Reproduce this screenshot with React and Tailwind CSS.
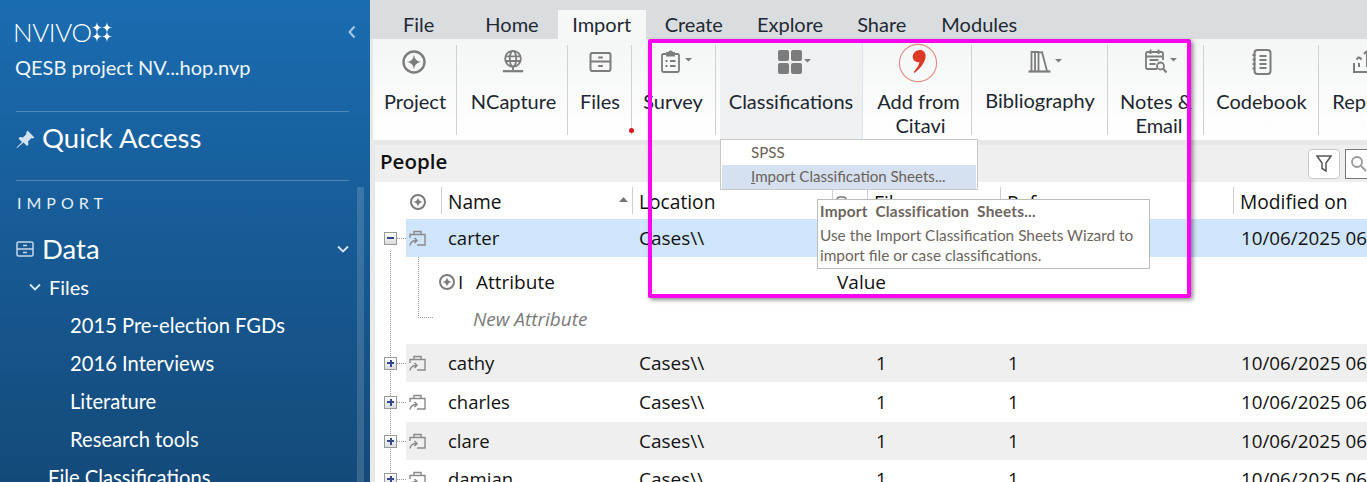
const lato = { fontFamily: 'Lato, sans-serif' };
const G = '#7c7c7c';

function Caret({ x = 0, y = 0 }) {
  return <path d={`M${x} ${y}h7l-3.5 3.5z`} fill={G} stroke="none" />;
}
function ProjectIcon({ size = 24, sw = 2.4, className = 'shrink-0' }) {
  return (
    <svg width={size} height={size} viewBox="0 0 24 24" fill="none" className={className}>
      <circle cx="12" cy="12" r="10.5" stroke={G} strokeWidth={sw} />
      <path d="M12 4.500c.6 4.500 2.500 6.900 7.500 7.500-5 .6-6.900 3-7.500 7.500-.6-4.500-2.500-6.900-7.500-7.500 5-.6 6.900-3 7.500-7.500z" fill={G} />
    </svg>
  );
}
function NCaptureIcon() {
  return (
    <svg width="24" height="25" viewBox="0 0 26 26" fill="none" stroke={G} strokeWidth="2">
      <circle cx="13" cy="10" r="8.500" />
      <ellipse cx="13" cy="10" rx="3.500" ry="8.500" />
      <path d="M4.500 7.500h17M4.500 12.500h17M13 18.500v4" />
      <path d="M2 23.500h22" strokeWidth="2.400" />
    </svg>
  );
}
function FilesIcon({ w = 23, h = 20, sw = 2.2 }) {
  return (
    <svg width={w} height={h} viewBox="0 0 24 22" fill="none" stroke={G} strokeWidth={sw}>
      <rect x="1" y="1" width="22" height="20" rx="2" />
      <path d="M1 10.500h22M9.500 6h5M9.500 15.500h5" />
    </svg>
  );
}
function SurveyIcon() {
  return (
    <svg width="32" height="24" viewBox="0 0 32 24" fill="none" stroke={G} strokeWidth="1.800" className="ml-[6px]">
      <path d="M5.500 4H2.500a1.500 1.500 0 0 0-1.500 1.500v15A1.500 1.500 0 0 0 2.500 22h14a1.500 1.500 0 0 0 1.500-1.500v-15A1.500 1.500 0 0 0 16.500 4h-3" />
      <path d="M6 5.500V3h2a1.500 1.500 0 0 1 3 0h2v2.500z" fill={G} />
      <path d="M4.500 11h2M9 11h5.500M4.500 16h2M9 16h5.500" strokeWidth="2" />
      <Caret x={24} y={8} />
    </svg>
  );
}
function ClassIcon() {
  return (
    <svg width="34" height="24" viewBox="0 0 34 24" fill={G} className="ml-[7px]">
      <rect x="0" y="0" width="11" height="11" rx="2" />
      <rect x="13" y="0" width="11" height="11" rx="2" />
      <rect x="0" y="13" width="11" height="11" rx="2" />
      <rect x="13" y="13" width="11" height="11" rx="2" />
      <Caret x={26} y={9} />
    </svg>
  );
}
function CitaviIcon() {
  return (
    <svg width="40" height="40" viewBox="0 0 42 42" fill="none">
      <circle cx="21" cy="21" r="19.500" stroke="#e58b80" strokeWidth="1.200" />
      <path d="M20 8c5-2 9 1 9 5.500 0 6-5 13-11.500 18l-1-1c3-3.500 5.500-7 6-10.500-3.500.8-7-1.500-7-5.500 0-3 2-5.500 4.500-6.500z" fill="#dc3a26" />
    </svg>
  );
}
function BiblioIcon() {
  return (
    <svg width="34" height="24" viewBox="0 0 34 24" fill="none" stroke={G} strokeWidth="1.800" className="ml-[10px]">
      <path d="M3.500 21V2h3.500v19M7 21V2h3.500v19M10.500 21V3l3.500-1 5 19" />
      <path d="M0.500 21.500h22" strokeWidth="2.200" />
      <Caret x={27} y={9} />
    </svg>
  );
}
function NotesIcon() {
  return (
    <svg width="32" height="26" viewBox="0 0 32 26" fill="none" stroke={G} strokeWidth="1.800" className="ml-[10px]">
      <path d="M12 20H2.500A1.500 1.500 0 0 1 1 18.500v-14A1.500 1.500 0 0 1 2.500 3h14A1.500 1.500 0 0 1 18 4.500V11" />
      <path d="M5.500 0.500v4.500M13.500 0.500v4.500M1 7.500h17M4.500 11h9M4.500 15h6" />
      <circle cx="15.500" cy="17" r="3.500" />
      <path d="M18 19.500l3.500 4" strokeWidth="2" />
      <Caret x={25} y={9} />
    </svg>
  );
}
function CodebookIcon() {
  return (
    <svg width="20" height="26" viewBox="0 0 20 26" fill="none" stroke={G} strokeWidth="2">
      <rect x="2.500" y="1" width="16" height="24" rx="3" />
      <path d="M0.500 6h3M0.500 10.500h3M0.500 15h3M0.500 19.500h3" />
      <path d="M7.500 7h7M7.500 11h7M7.500 15h7M7.500 19h7" strokeWidth="2" />
    </svg>
  );
}
function ReportIcon() {
  return (
    <svg width="26" height="26" viewBox="0 0 26 26" fill="none" stroke={G} strokeWidth="2" className="ml-[8px]">
      <path d="M1 14v9h24v-9M6 14v4M6 8l-2.500 2.500M6 8l2.500 2.500M14 2v16M14 2l-3 3M14 2l3 3" />
    </svg>
  );
}
function CaseIcon() {
  return (
    <svg width="17" height="17" viewBox="0 0 17 17" fill="none" stroke="#8a8a8a" strokeWidth="1.400">
      <path d="M1 8V4.500h15V15H8" />
      <path d="M5 4.500V1.500h7v3" />
      <path d="M1 15.500c.5-3.500 2.500-5 6.500-5M5.500 8l2.500 2.500L5.500 13" strokeWidth="1.500" />
    </svg>
  );
}
function Star({ x, y }) {
  return <path d={`M${x} ${y - 5.500}c.4 3.500 1.600 5 5 5.500-3.400.5-4.600 2-5 5.500-.4-3.500-1.600-5-5-5.500 3.400-.5 4.600-2 5-5.500z`} fill="white" />;
}
function FilesIconWhite() {
  return (
    <svg width="18" height="16" viewBox="0 0 18 16" fill="none" stroke="#c5d8e9" strokeWidth="1.500">
      <rect x="1" y="1" width="16" height="14" rx="1.500" />
      <path d="M1 8h16M7 4.500h4M7 11.500h4" />
    </svg>
  );
}

function Sidebar() {
  return (
    <aside className="relative w-[370px] h-full shrink-0 overflow-hidden text-white bg-gradient-to-b from-[#1a6cb1] to-[#144a7a]" style={lato}>
      <div className="flex items-center pl-[13px] pr-[12px] pt-[17px] h-[46px]">
        <span className="text-[26px] leading-none font-light tracking-[-0.4px]">NVIVO</span>
        <svg width="22" height="20" viewBox="0 0 22 20" className="ml-[-1px]">
          <Star x={6} y={5.500} /><Star x={16} y={5.500} /><Star x={6} y={14.500} /><Star x={16} y={14.500} />
        </svg>
        <svg width="8" height="14" viewBox="0 0 8 14" className="ml-auto mr-[2px]" fill="none" stroke="#a8c6e0" strokeWidth="2">
          <path d="M6.500 1.500L1.500 7l5 5.500" />
        </svg>
      </div>
      <div className="pl-[15px] mt-[9px] text-[20px] leading-[24px] text-[#eef5fb]">QESB project NV...hop.nvp</div>
      <div className="mx-[16px] w-[333px] mt-[32px] border-t border-white/25"></div>
      <div className="flex items-center pl-[16px] h-[68px] pb-[16px]">
        <svg width="19" height="19" viewBox="0 0 19 19" fill="#d3e2f0" className="mt-[3px]">
          <path d="M11.500 0.500l7 7-2 1-1-.5-3.500 3.500.5 3-1.500 1.500-3.500-3.500L1 18l-.5-.5L6 12 2.500 8.500 4 7l3 .5L10.500 4 10 3z" />
        </svg>
        <span className="ml-[7px] text-[27.500px] leading-none">Quick Access</span>
      </div>
      <div className="mx-[16px] w-[333px] border-t border-white/25"></div>
      <div className="pl-[17px] mt-[12px] text-[16px] leading-[20px] tracking-[5px] text-[#e6f0f8]">IMPORT</div>
      <div className="flex items-center pl-[16px] pr-[21px] mt-[16px] h-[39px]">
        <FilesIconWhite />
        <span className="ml-[8px] text-[27.500px] leading-none">Data</span>
        <svg width="12" height="8" viewBox="0 0 12 8" className="ml-auto" fill="none" stroke="#d8e6f2" strokeWidth="1.800"><path d="M1 1.500l5 5 5-5" /></svg>
      </div>
      <div className="flex items-center pl-[29px] h-[38px]">
        <svg width="12" height="8" viewBox="0 0 12 8" fill="none" stroke="#d8e6f2" strokeWidth="1.800"><path d="M1 1.500l5 5 5-5" /></svg>
        <span className="ml-[8px] text-[20px]">Files</span>
      </div>
      {['2015 Pre-election FGDs', '2016 Interviews', 'Literature', 'Research tools'].map((t) => (
        <div key={t} className="pl-[70px] h-[38px] flex items-center text-[20.200px]">{t}</div>
      ))}
      <div className="pl-[48px] h-[38px] flex items-center text-[20.200px]">File Classifications</div>
      <div className="absolute left-[357px] top-[187px] bottom-0 w-[7px] bg-white/15"></div>
    </aside>
  );
}

function Tabs() {
  const tabs = [
    ['File', 'px-[16px] ml-[17px]'], ['Home', 'px-[16px] ml-[19px]'], ['Import', 'w-[88px] justify-center ml-[3px] bg-[#f6f7f7]'], ['Create', 'px-[16px] ml-[3px]'],
    ['Explore', 'px-[16px] ml-[2px]'], ['Share', 'px-[16px] ml-[2px]'], ['Modules', 'px-[16px] ml-[3px]'],
  ];
  return (
    <div className="h-[39px] flex items-end bg-[#dadde0] text-[20px] text-[#1f2933] shrink-0" style={lato}>
      {tabs.map(([t, c]) => (
        <div key={t} className={`h-[29px] pb-[2px] flex items-center whitespace-nowrap ${c}`}>{t}</div>
      ))}
    </div>
  );
}

function RibbonBtn({ w, icon, children, top = 'pt-[5px]', active, sep = true, h = 'h-[35px]', gap = 'mt-[10px]' }) {
  return (
    <div className={`relative shrink-0 h-full flex flex-col items-center ${w} ${top} ${active ? 'bg-[#eff0f1] border-r border-[#dbe4f2]' : ''}`}>
      <div className={`${h} flex items-center justify-center`}>{icon}</div>
      <div className={`text-[20px] leading-[24px] ${gap} whitespace-nowrap text-center text-[#1d2730]`}>{children}</div>
      {sep && <div className="absolute right-0 top-[6px] bottom-[5px] w-px bg-[#cfd2d4]"></div>}
    </div>
  );
}

function Ribbon() {
  return (
    <div className="h-[101px] ml-[3px] flex overflow-hidden bg-gradient-to-b from-[#f4f5f5] to-[#ffffff] shrink-0" style={lato}>
      <RibbonBtn w="w-[84px]" icon={<ProjectIcon className="mr-[2px]" />}>Project</RibbonBtn>
      <RibbonBtn w="w-[111px]" icon={<NCaptureIcon />}><span className="block ml-[2px]">NCapture</span></RibbonBtn>
      <div className="relative shrink-0 w-[64px]">
        <RibbonBtn w="w-[64px]" icon={<FilesIcon />}>Files</RibbonBtn>
        <div className="absolute right-[-2px] bottom-[7px] w-[5px] h-[5px] rounded-full bg-[#e0141c]"></div>
      </div>
      <RibbonBtn w="w-[84px]" icon={<SurveyIcon />}><span className="block mr-[2px]">Survey</span></RibbonBtn>
      <div className="w-[4px] shrink-0"></div>
      <RibbonBtn w="w-[143px]" icon={<ClassIcon />} active sep={false}>Classifications</RibbonBtn>
      <RibbonBtn w="w-[109px]" icon={<CitaviIcon />} top="pt-[4px]" h="h-[40px]" gap="mt-[6px]">
        <span className="block ml-[2px]">Add from</span>
        <span className="block ml-[6px]">Citavi</span>
      </RibbonBtn>
      <RibbonBtn w="w-[136px]" icon={<BiblioIcon />} gap="mt-[9px]">Bibliography</RibbonBtn>
      <RibbonBtn w="w-[96px]" icon={<NotesIcon />}>
        <span className="block">Notes &amp;</span>
        <span className="block ml-[6px]">Email</span>
      </RibbonBtn>
      <RibbonBtn w="w-[115px]" icon={<CodebookIcon />}>Codebook</RibbonBtn>
      <RibbonBtn w="w-[86px]" icon={<ReportIcon />} sep={false}>Report</RibbonBtn>
    </div>
  );
}

function PeopleBar() {
  return (
    <div className="h-[37px] ml-[5px] mt-[5px] flex items-center bg-[#efefef] pl-[5px] shrink-0">
      <span className="text-[20.500px] font-semibold text-[#111] mb-[5px]">People</span>
      <div className="ml-auto flex items-center">
        <div className="w-[32px] h-[30px] rounded-[4px] border border-[#c8c8c8] bg-white flex items-center justify-center">
          <svg width="16" height="17" viewBox="0 0 16 17" fill="none" stroke="#555" strokeWidth="1.500"><path d="M1 1h14L10 8v8l-4-2.500V8z" /></svg>
        </div>
        <div className="ml-[5px] w-[22px] h-[30px] border border-[#777] border-r-0 bg-white flex items-center pl-[4px] overflow-hidden">
          <svg width="18" height="18" viewBox="0 0 18 18" fill="none" stroke="#999" strokeWidth="1.800" className="shrink-0"><circle cx="7" cy="7" r="5" /><path d="M11 11l5 5" /></svg>
        </div>
      </div>
    </div>
  );
}

function HeaderCell({ w, children, sep = true }) {
  return (
    <div className={`relative shrink-0 h-full flex items-center pl-[7px] pt-[3px] whitespace-nowrap ${w}`}>
      {sep && <div className="absolute left-0 top-[5px] bottom-[5px] w-px bg-[#cfcfcf]"></div>}
      {children}
    </div>
  );
}

function Expander({ open }) {
  return (
    <div className="ml-[9px] w-[13px] h-[13px] border border-[#9a9a9a] bg-gradient-to-b from-[#ffffff] to-[#dcdcdc] flex items-center justify-center relative z-10 shrink-0">
      <div className="w-[7px] h-[2px] bg-[#34478f]"></div>
      {!open && <div className="absolute w-[2px] h-[7px] bg-[#34478f]"></div>}
    </div>
  );
}

function Row({ name, h, bg = 'bg-white', open }) {
  return (
    <div className={`flex items-center ${h}`}>
      <div className="w-[31px] shrink-0 flex items-center">
        <Expander open={open} />
        <div className="w-[9px] border-t border-dotted border-[#999]"></div>
      </div>
      <div className={`flex-1 h-full flex items-center ${bg}`}>
        <div className="w-[233px] shrink-0 flex items-center pl-[3px]">
          <CaseIcon />
          <span className="ml-[22px]">{name}</span>
        </div>
        <div className="w-[237px] shrink-0 text-[19px]">Cases\\</div>
        <div className="w-[132px] shrink-0">{name === 'carter' ? '' : '1'}</div>
        <div className="w-[233px] shrink-0">{name === 'carter' ? '' : '1'}</div>
        <div className="whitespace-nowrap text-[18.800px]">10/06/2025 06:41</div>
      </div>
    </div>
  );
}

function Table() {
  return (
    <div className="relative flex-1 ml-[5px] bg-white overflow-hidden text-[18.500px] text-[#111]">
      <div className="absolute left-[15px] top-[69px] bottom-0 border-l border-dotted border-[#999]"></div>
      <div className="flex items-center h-[37px] pl-[31px] text-[19.200px]">
        <div className="w-[35px] h-full shrink-0 flex items-center pl-[4px] pt-[3px]"><ProjectIcon size={16} sw={3} /></div>
        <HeaderCell w="w-[191px]">
          Name
          <svg width="9" height="5" viewBox="0 0 9 5" className="absolute right-[4px] top-[15px]"><path d="M0 5h9L4.500 0z" fill="#777" /></svg>
        </HeaderCell>
        <HeaderCell w="w-[200px]">Location</HeaderCell>
        <HeaderCell w="w-[35px]">
          <svg width="18" height="12" viewBox="0 0 18 12" fill="none" stroke="#777" strokeWidth="1.600" className="ml-[-3px]">
            <rect x="1" y="1" width="9" height="6" rx="3" /><rect x="8" y="5" width="9" height="6" rx="3" />
          </svg>
        </HeaderCell>
        <HeaderCell w="w-[133px]"><span className="mt-[2px]">Files</span></HeaderCell>
        <HeaderCell w="w-[233px]"><span className="mt-[2px]">References</span></HeaderCell>
        <HeaderCell w="w-[140px]">Modified on</HeaderCell>
      </div>
      <Row name="carter" h="h-[38px]" bg="bg-[#cfe5fb]" open />
      <div className="relative h-[87px] text-[19px]">
        <div className="absolute left-[43px] top-0 h-[61px] w-[15px] border-l border-b border-dotted border-[#999]"></div>
        <div className="flex items-center h-[50px] pl-[64px]">
          <ProjectIcon size={16} sw={3} />
          <span className="ml-[3px] w-[18px]">I</span>
          <span className="w-[361px]">Attribute</span>
          <span>Value</span>
        </div>
        <div className="flex items-center h-[24px] pl-[98px] italic text-[#7b7b7b]">New Attribute</div>
      </div>
      <Row name="cathy" h="h-[38px]" bg="bg-[#efefef]" />
      <Row name="charles" h="h-[40px]" />
      <Row name="clare" h="h-[38px]" bg="bg-[#efefef]" />
      <Row name="damian" h="h-[38px]" />
    </div>
  );
}

function Overlays() {
  return (
    <>
      <div className="absolute left-[720px] top-[139px] w-[258px] h-[51px] bg-white border border-[#c9c9c9] px-[1px] text-[15.100px] text-[#6b6258]" style={lato}>
        <div className="h-[25px] pl-[29px] flex items-center">SPSS</div>
        <div className="h-[24px] pl-[29px] pb-[2px] flex items-center bg-[#d5e0f1]"><span><u>I</u>mport Classification Sheets...</span></div>
      </div>
      <div className="absolute left-[817px] top-[199px] w-[333px] h-[70px] bg-white border border-[#bdbdbd] pl-[2px] pt-[1px] text-[15.400px] text-[#6d655e]" style={lato}>
        <div className="font-bold leading-[20px] tracking-[0.200px] whitespace-pre">Import  Classification  Sheets...</div>
        <div className="leading-[20px] mt-[4px]">Use the Import Classification Sheets Wizard to</div>
        <div className="leading-[20px]">import file or case classifications.</div>
      </div>
      <div className="absolute left-[648px] top-[39px] w-[543px] h-[259px] border-[4px] border-[#fb04f0] rounded-[2px] shadow-[2px_2px_4px_rgba(0,0,0,0.45)]"></div>
    </>
  );
}

export default function App() {
  return (
    <div className="relative w-[1367px] h-[482px] flex overflow-hidden bg-[#e6e8ea]" style={{ fontFamily: '"Open Sans", sans-serif' }}>
      <Sidebar />
      <main className="flex-1 min-w-0 h-full flex flex-col">
        <Tabs />
        <Ribbon />
        <PeopleBar />
        <Table />
      </main>
      <Overlays />
    </div>
  );
}
